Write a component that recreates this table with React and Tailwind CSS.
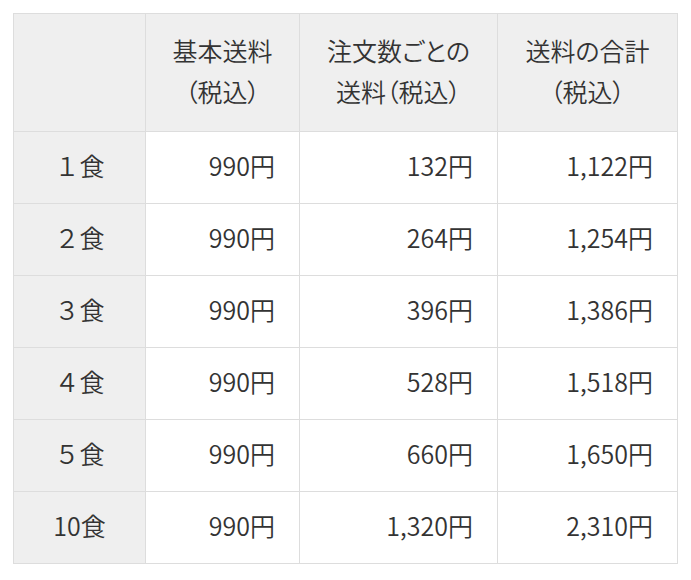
import React from "react";

const rows = [
  ["１食", "990円", "132円", "1,122円"],
  ["２食", "990円", "264円", "1,254円"],
  ["３食", "990円", "396円", "1,386円"],
  ["４食", "990円", "528円", "1,518円"],
  ["５食", "990円", "660円", "1,650円"],
  ["10食", "990円", "1,320円", "2,310円"],
];

export default function App() {
  return (
    <div className="bg-white w-[691px] h-[580px] pt-[13px] pl-[13px] text-[#333] text-[25px] leading-[41px] font-[350] [font-family:'Noto_Sans_CJK_JP','Noto_Sans',sans-serif]">
      <table className="border-collapse table-fixed w-[664px]">
        <colgroup>
          <col className="w-[132px]" />
          <col className="w-[154px]" />
          <col className="w-[198px]" />
          <col className="w-[180px]" />
        </colgroup>
        <thead>
          <tr className="h-[118px] bg-[#efefef] [font-feature-settings:'palt']">
            <th className="border border-[#dddddd] font-[350]"></th>
            <th className="border border-[#dddddd] font-[350] text-center pb-[4px]">
              基本送料
              <br />
              （税込）
            </th>
            <th className="border border-[#dddddd] font-[350] text-center pb-[4px]">
              注文数ごとの
              <br />
              送料（税込）
            </th>
            <th className="border border-[#dddddd] font-[350] text-center pb-[4px]">
              送料の合計
              <br />
              （税込）
            </th>
          </tr>
        </thead>
        <tbody>
          {rows.map((r) => (
            <tr key={r[0]} className="h-[72px]">
              <td className="border border-[#dddddd] bg-[#efefef] text-center pb-[5px]">{r[0]}</td>
              <td className="border border-[#dddddd] text-right pr-[24px] pb-[5px]">{r[1]}</td>
              <td className="border border-[#dddddd] text-right pr-[24px] pb-[5px]">{r[2]}</td>
              <td className="border border-[#dddddd] text-right pr-[24px] pb-[5px]">{r[3]}</td>
            </tr>
          ))}
        </tbody>
      </table>
    </div>
  );
}
